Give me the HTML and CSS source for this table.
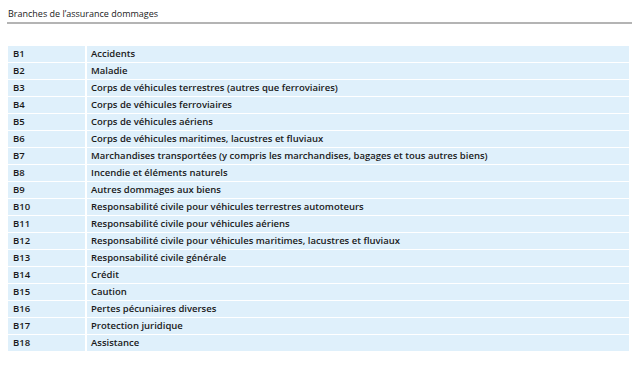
FILE: index.html
```html
<!DOCTYPE html>
<html lang="fr">
<head>
<meta charset="utf-8">
<link rel="stylesheet" href="styles.css">
</head>
<body>
<div class="page">
  <h1 class="title">Branches de l’assurance dommages</h1>
  <div class="rows">
    <div class="row"><div class="code">B1</div><div class="label">Accidents</div></div>
    <div class="row"><div class="code">B2</div><div class="label">Maladie</div></div>
    <div class="row"><div class="code">B3</div><div class="label">Corps de véhicules terrestres (autres que ferroviaires)</div></div>
    <div class="row"><div class="code">B4</div><div class="label">Corps de véhicules ferroviaires</div></div>
    <div class="row"><div class="code">B5</div><div class="label">Corps de véhicules aériens</div></div>
    <div class="row"><div class="code">B6</div><div class="label">Corps de véhicules maritimes, lacustres et fluviaux</div></div>
    <div class="row"><div class="code">B7</div><div class="label">Marchandises transportées (y compris les marchandises, bagages et tous autres biens)</div></div>
    <div class="row"><div class="code">B8</div><div class="label">Incendie et éléments naturels</div></div>
    <div class="row"><div class="code">B9</div><div class="label">Autres dommages aux biens</div></div>
    <div class="row"><div class="code">B10</div><div class="label">Responsabilité civile pour véhicules terrestres automoteurs</div></div>
    <div class="row"><div class="code">B11</div><div class="label">Responsabilité civile pour véhicules aériens</div></div>
    <div class="row"><div class="code">B12</div><div class="label">Responsabilité civile pour véhicules maritimes, lacustres et fluviaux</div></div>
    <div class="row"><div class="code">B13</div><div class="label">Responsabilité civile générale</div></div>
    <div class="row"><div class="code">B14</div><div class="label">Crédit</div></div>
    <div class="row"><div class="code">B15</div><div class="label">Caution</div></div>
    <div class="row"><div class="code">B16</div><div class="label">Pertes pécuniaires diverses</div></div>
    <div class="row"><div class="code">B17</div><div class="label">Protection juridique</div></div>
    <div class="row"><div class="code">B18</div><div class="label">Assistance</div></div>
  </div>
</div>
</body>
</html>
```
FILE: styles.css
```css
html, body {
  margin: 0;
  padding: 0;
  background: #ffffff;
}
body {
  font-family: "Open Sans", "Noto Sans", "Liberation Sans", sans-serif;
  color: #1a1a1a;
}
.page {
  padding: 8px 9px 0 7px;
}
.title {
  margin: 0;
  padding: 0 0 2px 1px;
  font-size: 9px;
  line-height: 12px;
  font-weight: 400;
  border-bottom: 2px solid #b4b4b4;
  width: 624px;
}
.rows {
  margin-top: 22px;
  display: flex;
  flex-direction: column;
  gap: 1px;
  padding-left: 1px;
  width: 621px;
}
.row {
  display: flex;
  gap: 2px;
  height: 16px;
  font-size: 9.5px;
  font-weight: 600;
  line-height: 16px;
}
.code, .label {
  background: #dff0fb;
  white-space: nowrap;
}
.code {
  width: 72px;
  flex: none;
  padding-left: 5px;
}
.label {
  flex: 1;
  padding-left: 4px;
}
```
